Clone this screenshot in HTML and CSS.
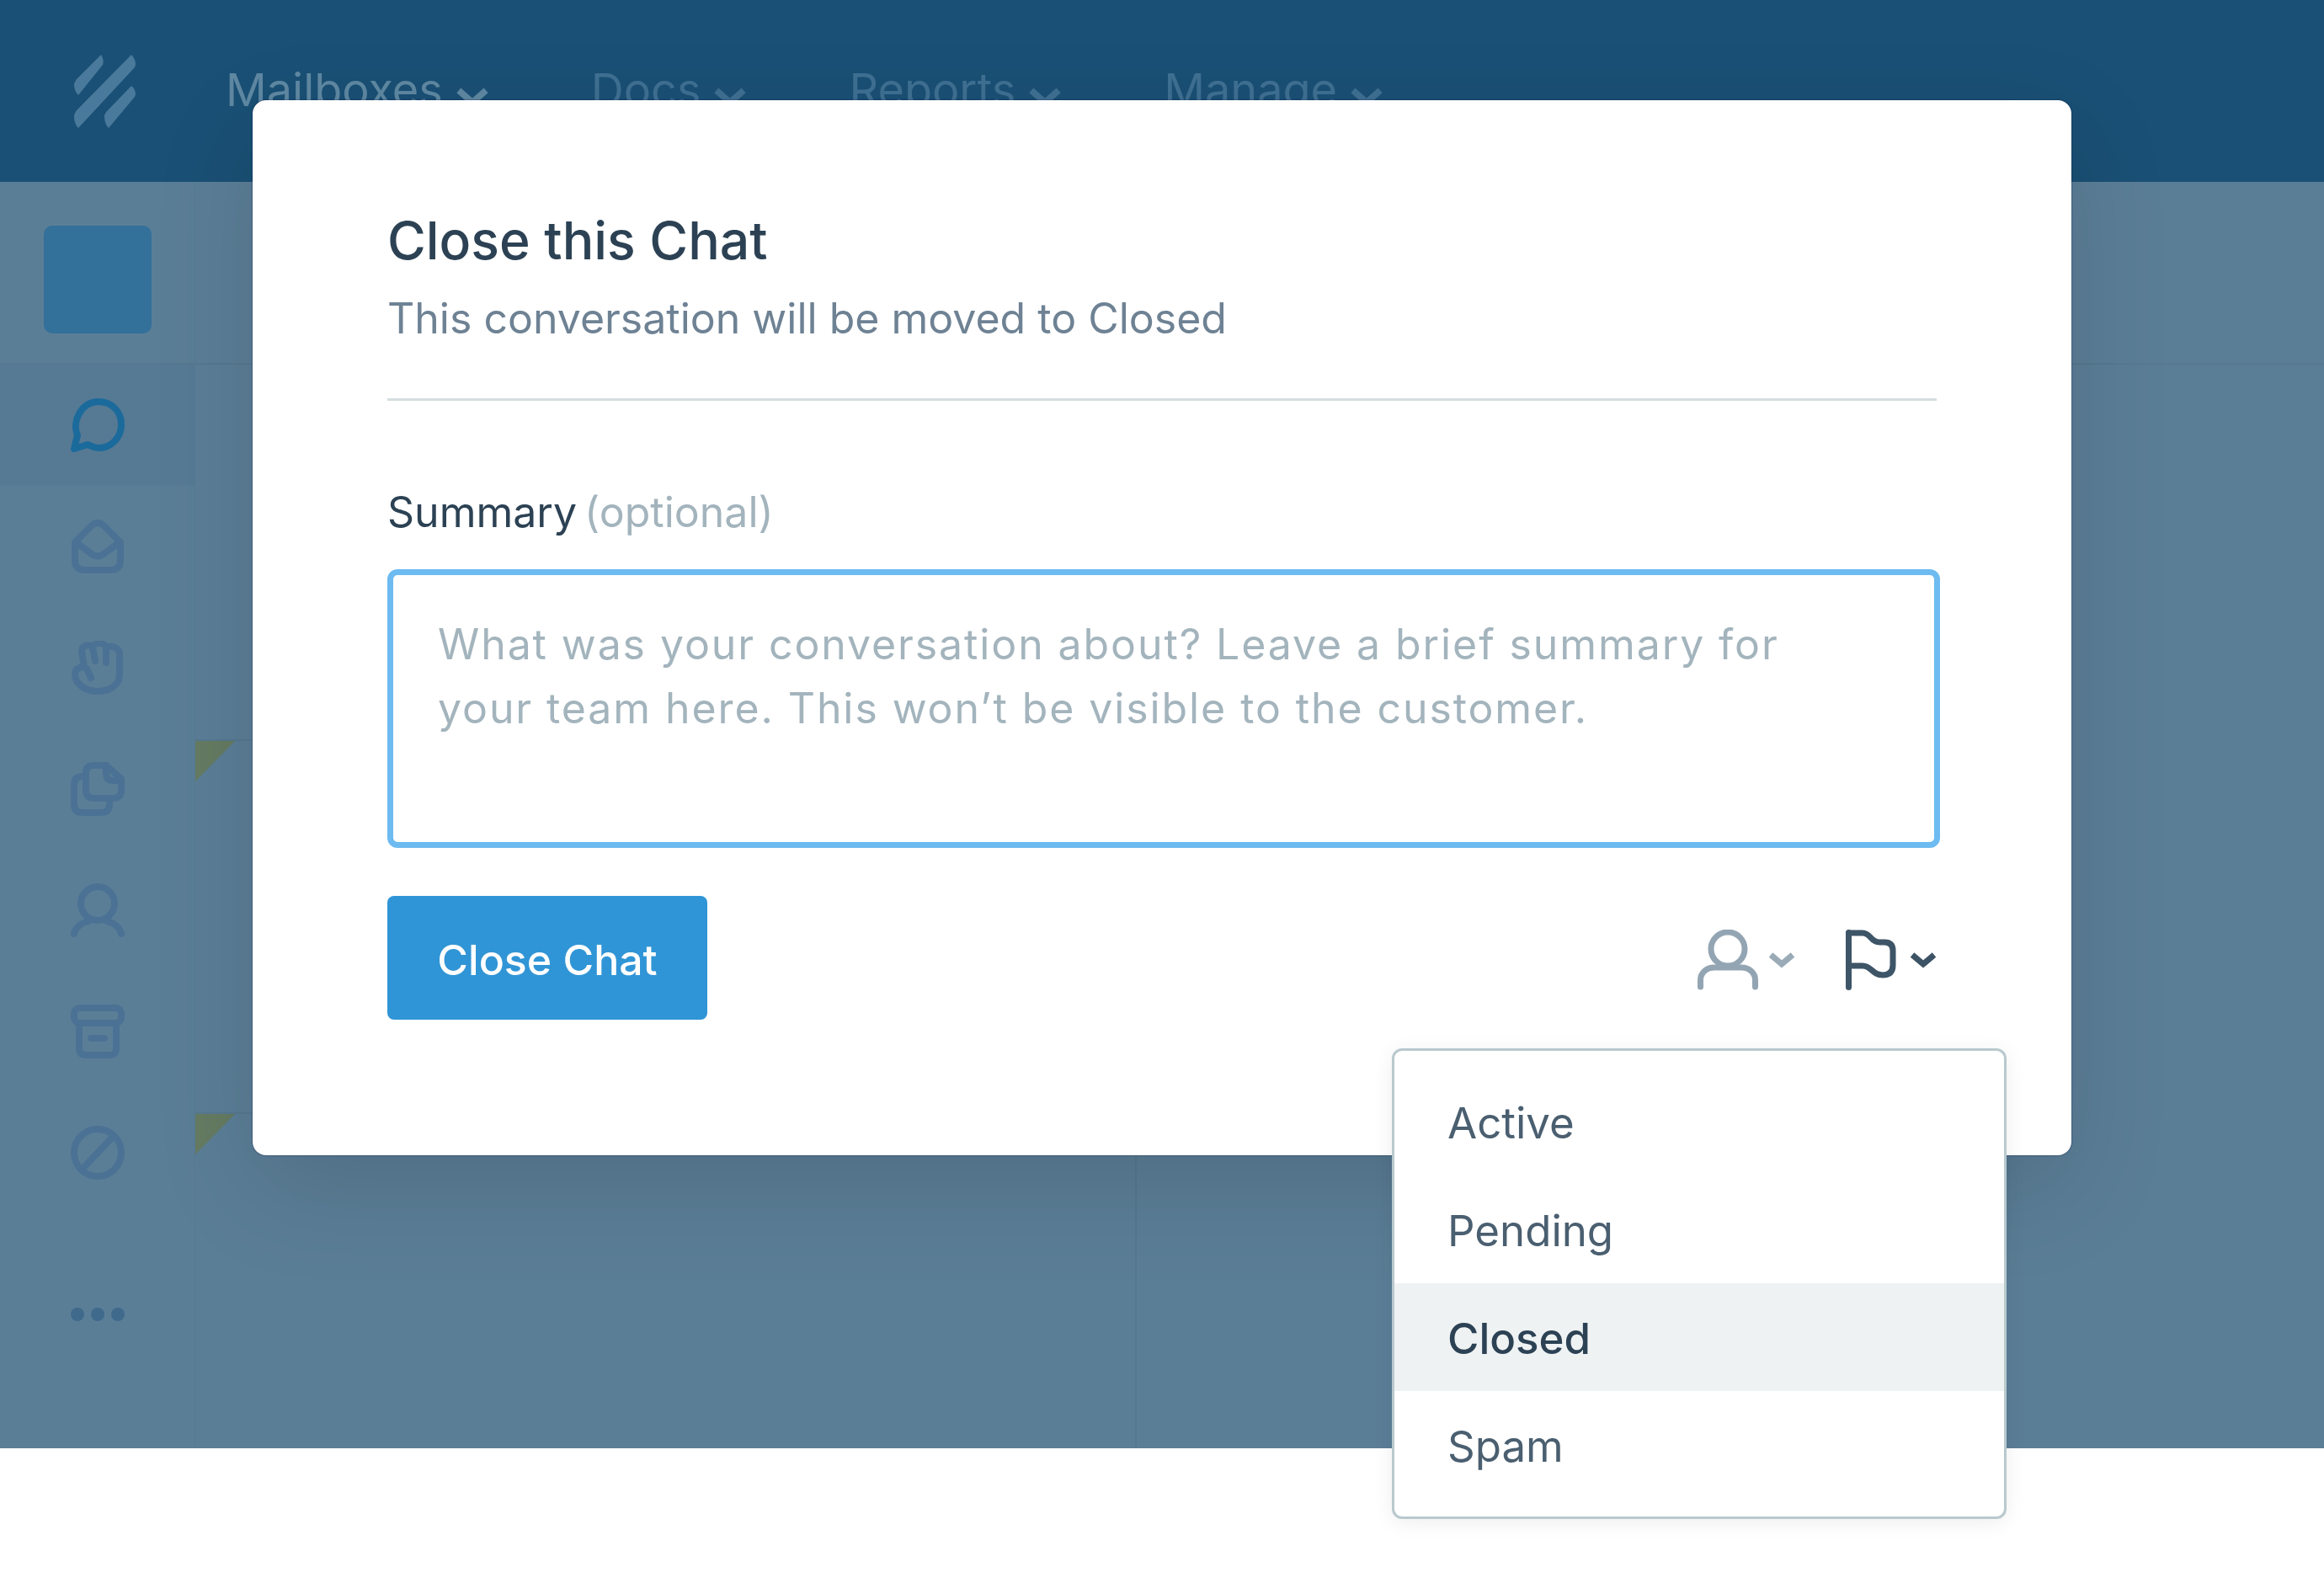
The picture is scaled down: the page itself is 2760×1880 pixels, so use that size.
FILE: index.html
```html
<!DOCTYPE html>
<html lang="en">
<head>
    <meta charset="UTF-8">
    <meta name="viewport" content="width=device-width, initial-scale=1.0">
    <title>Close this Chat</title>
    <link rel="stylesheet" href="styles.css">
</head>
<body>
    <div class="app">
        <header class="topbar">
            <svg class="logo" viewBox="0 0 74 88">
                <path d="M32 1 C35 5 35 10 34 13 L5 49 C1 45 0 40 0 36 C1 33 2 31 4 29 Z"/>
                <path d="M68 1 C73 6 74 12 72 16 L5 88 C1 84 0 78 0 73 C1 70 2 68 4 66 Z"/>
                <path d="M68 38 C73 42 74 48 72 51 L41 88 C37 84 36 78 36 73 C37 71 38 69 40 67 Z"/>
            </svg>
            <nav class="main-nav">
                <a class="nav-item nav-item-active">Mailboxes<svg class="nav-chevron" viewBox="0 0 40 24"><path d="M3 4 L20 19 L37 4"/></svg></a>
                <a class="nav-item">Docs<svg class="nav-chevron" viewBox="0 0 40 24"><path d="M3 4 L20 19 L37 4"/></svg></a>
                <a class="nav-item">Reports<svg class="nav-chevron" viewBox="0 0 40 24"><path d="M3 4 L20 19 L37 4"/></svg></a>
                <a class="nav-item">Manage<svg class="nav-chevron" viewBox="0 0 40 24"><path d="M3 4 L20 19 L37 4"/></svg></a>
            </nav>
        </header>
        <div class="workspace">
            <aside class="sidebar">
                <div class="sidebar-head"><div class="avatar"></div></div>
                <div class="side-row side-row-active">
                    <svg class="side-icon" viewBox="0 0 64 64"><path d="M4 60 L8 44 C1 27 13 4 33 4 C48 4 60 15 60 31 C60 47 48 59 33 59 C27 59 24 56 20 55 Z"/></svg>
                </div>
                <div class="side-row">
                    <svg class="side-icon" viewBox="0 0 64 64"><path d="M5 27 L25 7 Q32 1 39 7 L59 27 V48 Q59 60 47 60 H17 Q5 60 5 48 Z"/><path d="M6 27 L25 41 Q32 46 39 41 L58 27"/></svg>
                </div>
                <div class="side-row">
                    <svg class="side-icon" viewBox="0 0 64 64"><path d="M16 31 L13 13 C13 5 23 3 26 8 C28 1 40 1 42 8 C48 5 58 8 58 16 V40 C58 53 46 60 32 60 C16 60 5 50 5 40 C5 33 12 29 19 33 L24 44"/><path d="M26 8 L29 24"/><path d="M42 8 V26"/></svg>
                </div>
                <div class="side-row">
                    <svg class="side-icon" viewBox="0 0 64 64"><path d="M27 4 H42 L60 20 V33 Q60 43 50 43 H28 Q18 43 18 33 V13 Q18 4 27 4 Z"/><path d="M42 4 V13 Q42 22 50 22 H60"/><path d="M18 17 H14 Q4 17 4 27 V50 Q4 60 14 60 H36 Q46 60 46 50 V43"/></svg>
                </div>
                <div class="side-row">
                    <svg class="side-icon" viewBox="0 0 64 64"><circle cx="32" cy="24" r="20"/><path d="M4 60 C6 51 14 47 21 45"/><path d="M60 60 C58 51 50 47 43 45"/></svg>
                </div>
                <div class="side-row">
                    <svg class="side-icon" viewBox="0 0 64 64"><rect x="4" y="4" width="56" height="18" rx="7"/><path d="M10 22 V52 Q10 60 18 60 H46 Q54 60 54 52 V22"/><path d="M24 40 H40"/></svg>
                </div>
                <div class="side-row">
                    <svg class="side-icon" viewBox="0 0 64 64"><circle cx="32" cy="32" r="28"/><path d="M13 52 L51 12"/></svg>
                </div>
                <div class="side-dots"><span></span><span></span><span></span></div>
            </aside>
            <main class="content">
                <div class="content-head"></div>
                <div class="content-body">
                    <div class="list-pane">
                        <div class="list-row"><span class="corner"></span></div>
                        <div class="list-row list-row-last"><span class="corner"></span></div>
                    </div>
                    <div class="detail-pane"></div>
                </div>
            </main>
        </div>
    </div>

    <section class="modal">
        <h1 class="modal-title">Close this Chat</h1>
        <p class="modal-sub">This conversation will be moved to Closed</p>
        <hr class="modal-rule">
        <label class="field-label">Summary <span class="optional">(optional)</span></label>
        <div class="summary-box">What was your conversation about? Leave a brief summary for<br>your team here. This won’t be visible to the customer.</div>
        <div class="modal-actions">
            <button class="close-btn">Close Chat</button>
            <div class="action-icons">
                <div class="action action-muted">
                    <svg class="assign-icon" viewBox="0 0 72 72"><circle cx="36" cy="23" r="20"/><path d="M3.5 68 V60 C3.5 51 11 45 20 45 H52 C61 45 68.5 51 68.5 60 V68"/></svg>
                    <svg class="chevron" viewBox="0 0 32 20"><path d="M3 4 L16 15 L29 4"/></svg>
                </div>
                <div class="action action-flag">
                    <svg class="flag-icon" viewBox="0 0 60 72"><path d="M3.5 68.500 V3.500"/><path d="M3.500 4 H20 C30 4 29 15 40 15 H46 Q56 15 56 25 V42 Q56 54 44 54 C31 54 31 43 20 43 H3.500"/></svg>
                    <svg class="chevron" viewBox="0 0 32 20"><path d="M3 4 L16 15 L29 4"/></svg>
                </div>
                <ul class="status-menu">
                    <li>Active</li>
                    <li>Pending</li>
                    <li class="selected">Closed</li>
                    <li>Spam</li>
                </ul>
            </div>
        </div>
    </section>
</body>
</html>
```

FILE: styles.css
```css
* {
    box-sizing: border-box;
}

body {
    margin: 0;
    width: 2760px;
    height: 1880px;
    position: relative;
    overflow: hidden;
    background-color: #fff;
    font-family: Inter, "Liberation Sans", sans-serif;
}

.app {
    height: 1720px;
    display: flex;
    flex-direction: column;
    background-color: #5b7e97;
}

/* top bar */
.topbar {
    flex: none;
    height: 216px;
    display: flex;
    align-items: center;
    background-color: #1a5075;
    padding-left: 88px;
}

.logo {
    width: 74px;
    height: 88px;
    fill: #4a7a9b;
}

.main-nav {
    display: flex;
    gap: 122px;
    margin-left: 106px;
}

.nav-item {
    display: flex;
    align-items: center;
    gap: 16px;
    font-size: 54px;
    color: #3f7092;
    margin-top: -3px;
}

.nav-item-active {
    color: #5f88a2;
}

.nav-chevron {
    width: 38px;
    height: 24px;
    margin-top: 16px;
    fill: none;
    stroke: currentColor;
    stroke-width: 8;
}

/* backdrop app */
.workspace {
    flex: 1;
    min-height: 0;
    display: flex;
}

.sidebar {
    width: 232px;
    display: flex;
    flex-direction: column;
    border-right: 1px solid #587b94;
}

.sidebar-head {
    height: 217px;
    padding: 52px 52px 0;
    border-bottom: 2px solid #567890;
}

.avatar {
    width: 128px;
    height: 128px;
    border-radius: 10px;
    background-color: #33709a;
}

.side-row {
    height: 144px;
    display: flex;
    align-items: center;
    justify-content: center;
}

.side-row-active {
    background-color: #567a94;
}

.side-icon {
    width: 64px;
    height: 64px;
    fill: none;
    stroke: #4b7294;
    stroke-width: 8;
    stroke-linecap: round;
    stroke-linejoin: round;
}

.side-row-active .side-icon {
    stroke: #1b6a9c;
}

.side-dots {
    display: flex;
    justify-content: center;
    gap: 8px;
    margin-top: 112px;
}

.side-dots span {
    width: 16px;
    height: 16px;
    border-radius: 50%;
    background-color: #3f6a8c;
}

.content {
    flex: 1;
    display: flex;
    flex-direction: column;
}

.content-head {
    height: 217px;
    border-bottom: 2px solid #567890;
}

.content-body {
    flex: 1;
    min-height: 0;
    display: flex;
}

.list-pane {
    width: 1118px;
    padding-top: 445px;
    border-right: 2px solid #557991;
}

.list-row {
    height: 443px;
    border-top: 2px solid #567890;
}

.list-row-last {
    height: auto;
}

.corner {
    display: block;
    width: 0;
    height: 0;
    border-top: 48px solid #657b62;
    border-right: 47px solid transparent;
}

.detail-pane {
    flex: 1;
}

/* modal */
.modal {
    position: absolute;
    left: 300px;
    top: 119px;
    width: 2160px;
    height: 1253px;
    padding: 130px 160px 0;
    background-color: #fff;
    border-radius: 16px;
    box-shadow: 0 0 2px rgba(0, 20, 60, 0.7), 0 40px 120px rgba(0, 0, 0, 0.13);
}

.modal-title {
    margin: 0;
    font-size: 62.500px;
    line-height: 72px;
    font-weight: 500;
    color: #2c4254;
}

.modal-sub {
    margin: 27px 0 0;
    font-size: 50px;
    line-height: 60px;
    color: #6e8294;
}

.modal-rule {
    margin: 65px 0 0;
    height: 3px;
    border: none;
    background-color: #d5dde0;
}

.field-label {
    display: block;
    margin-top: 102px;
    font-size: 50px;
    line-height: 60px;
    word-spacing: -5px;
    color: #2c4254;
}

.optional {
    color: #a3b4bd;
}

.summary-box {
    margin-top: 38px;
    margin-right: -4px;
    height: 331px;
    padding: 44px 53px;
    border: 7px solid #6dbbf0;
    border-radius: 12px;
    font-size: 50px;
    line-height: 76px;
    letter-spacing: 1.900px;
    color: #a3b4bd;
}

.modal-actions {
    display: flex;
    justify-content: space-between;
    align-items: flex-start;
    margin-top: 57px;
}

.close-btn {
    width: 380px;
    height: 147px;
    padding: 4px 0 0;
    font-family: inherit;
    font-size: 50px;
    font-weight: 500;
    color: #fff;
    border: none;
    border-radius: 8px;
    background-color: #3095d6;
}

.action-icons {
    position: relative;
    display: flex;
    gap: 60px;
    margin-top: 40px;
}

.action {
    display: flex;
    align-items: center;
    gap: 12px;
}

.action-flag {
    gap: 16px;
}

.assign-icon {
    width: 72px;
    height: 72px;
    fill: none;
    stroke: #93a5b3;
    stroke-width: 7;
    stroke-linecap: round;
}

.flag-icon {
    width: 60px;
    height: 72px;
    fill: none;
    stroke: #3e5568;
    stroke-width: 7;
    stroke-linecap: round;
    stroke-linejoin: round;
}

.chevron {
    width: 32px;
    height: 20px;
    margin-top: 0;
    fill: none;
    stroke: #9aabb7;
    stroke-width: 7;
}

.action-flag .chevron {
    stroke: #3c5365;
}

.status-menu {
    position: absolute;
    top: 141px;
    right: -83px;
    width: 730px;
    height: 559px;
    margin: 0;
    padding: 20px 0;
    list-style: none;
    background-color: #fff;
    border: 3px solid #b9c9ce;
    border-radius: 12px;
    box-shadow: 0 4px 24px rgba(0, 0, 0, 0.07);
}

.status-menu li {
    height: 128px;
    line-height: 128px;
    padding: 2px 0 0 63px;
    font-size: 51px;
    color: #4a5f70;
}

.status-menu .selected {
    background-color: #eff2f3;
    font-weight: 500;
    color: #2c4254;
}
```
